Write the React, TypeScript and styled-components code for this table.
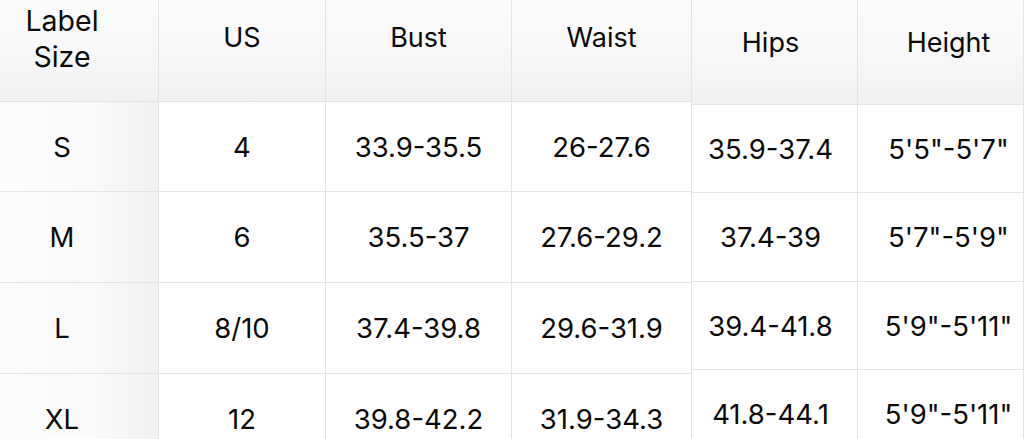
import React from "react";
import styled, { createGlobalStyle } from "styled-components";

const leftHeads = ["US", "Bust", "Waist"];
const leftRows = [
  ["S", "4", "33.9-35.5", "26-27.6"],
  ["M", "6", "35.5-37", "27.6-29.2"],
  ["L", "8/10", "37.4-39.8", "29.6-31.9"],
  ["XL", "12", "39.8-42.2", "31.9-34.3"],
];

const rightHeads = ["Hips", "Height"];
const rightRows = [
  ["35.9-37.4", `5'5"-5'7"`],
  ["37.4-39", `5'7"-5'9"`],
  ["39.4-41.8", `5'9"-5'11"`],
  ["41.8-44.1", `5'9"-5'11"`],
];

const rightShift = [-8, 16];

function App() {
  return (
    <>
      <GlobalStyle />
      <Page>
        <LeftTable>
          <HeadCell $lift={13} $shift={-34}>
            <LabelHead>
              Label
              <br />
              Size
            </LabelHead>
          </HeadCell>
          {leftHeads.map((h) => (
            <HeadCell key={h} $lift={13}>
              {h}
            </HeadCell>
          ))}
          {leftRows.map((row) =>
            row.map((v, i) =>
              i === 0 ? (
                <SizeCell key={row[0] + i} $shift={-34}>
                  {v}
                </SizeCell>
              ) : (
                <Cell key={row[0] + i}>{v}</Cell>
              )
            )
          )}
        </LeftTable>
        <RightTable>
          {rightHeads.map((h, i) => (
            <HeadCell key={h} $lift={10} $shift={rightShift[i]}>
              {h}
            </HeadCell>
          ))}
          {rightRows.map((row, r) =>
            row.map((v, i) => (
              <Cell key={r + "-" + i} $shift={rightShift[i]}>
                {v}
              </Cell>
            ))
          )}
        </RightTable>
      </Page>
    </>
  );
}

export default App;

const GlobalStyle = createGlobalStyle`
  html, body {
    margin: 0;
    padding: 0;
    background: #ffffff;
    overflow: hidden;
  }
  body {
    font-family: "Inter", "Liberation Sans", sans-serif;
    color: #0a0a0a;
  }
`;

const Page = styled.div`
  display: flex;
  width: 1024px;
  height: 439px;
  overflow: hidden;
  background: #ffffff;
`;

const LeftTable = styled.div`
  display: grid;
  grid-template-columns: 159px 167px 186px 180px;
  grid-template-rows: 102px 90px 91px 91px 91px;
`;

const RightTable = styled.div`
  display: grid;
  grid-template-columns: 166px 166px;
  grid-template-rows: 105px 88px 89px 88px 88px;
`;

const Cell = styled.div<{ $shift?: number }>`
  display: flex;
  align-items: center;
  justify-content: center;
  box-sizing: border-box;
  padding-left: ${(p) => Math.max(p.$shift ?? 0, 0)}px;
  padding-right: ${(p) => Math.max(-(p.$shift ?? 0), 0)}px;
  border-right: 1px solid #e3e3e3;
  border-bottom: 1px solid #e3e3e3;
  font-size: 27.5px;
  background: #ffffff;
`;

const SizeCell = styled(Cell)`
  background: linear-gradient(to right, #fdfdfd 0%, #f9f9f9 60%, #f1f1f1 100%);
`;

const HeadCell = styled(Cell)<{ $lift: number }>`
  padding-bottom: ${(p) => p.$lift * 2}px;
  font-size: 27px;
  background: linear-gradient(to bottom, #fbfbfb 0%, #f7f7f7 60%, #f1f1f1 100%);
`;

const LabelHead = styled.div`
  text-align: center;
  font-size: 28.5px;
  line-height: 36px;
  margin-top: 2px;
`;
